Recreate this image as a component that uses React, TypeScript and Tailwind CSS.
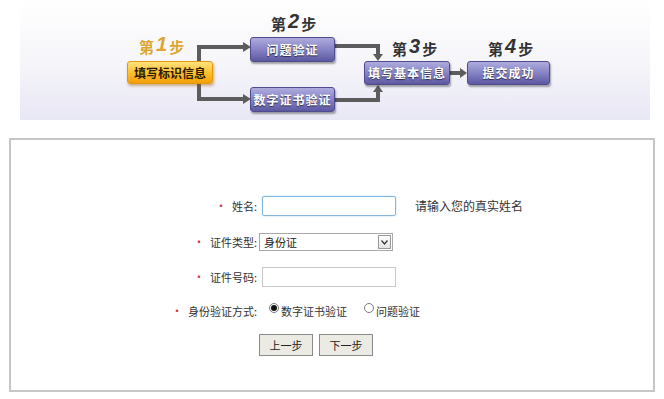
import React from "react";

const font = { fontFamily: '"Noto Sans CJK SC", "Noto Sans", sans-serif' };

// one step node in the banner diagram
const StepBox = ({
  text,
  className,
}: {
  text: string;
  className: string;
}) => (
  <div
    className={`absolute flex items-center justify-center rounded-[3px] border border-[#4f4b8f] bg-linear-to-b from-[#aeacdd] via-[#8783c6] to-[#5d59a1] text-[12px] font-bold tracking-[1px] text-white shadow-[1px_2px_2px_rgba(0,0,0,0.35)] [text-shadow:0_1px_1px_rgba(0,0,0,0.6)] ${className}`}
  >
    {text}
  </div>
);

const StepLabel = ({
  n,
  className,
  color = "text-[#333]",
}: {
  n: string;
  className: string;
  color?: string;
}) => (
  <div className={`absolute flex items-end font-bold ${color} ${className}`}>
    <span className="text-[15px] leading-none">第</span>
    <span className="mx-[2px] text-[20px] italic leading-none [font-family:'Liberation_Sans',sans-serif]">
      {n}
    </span>
    <span className="text-[15px] leading-none">步</span>
  </div>
);

const Label = ({ text }: { text: string }) => (
  <div className="flex w-[251px] items-center justify-end pr-[5px] text-[11px] text-[#333]">
    <span className="mr-[5px] text-[12px] leading-none text-[#d23c4a]">•</span>
    {text}
  </div>
);

const Radio = ({ checked }: { checked?: boolean }) => (
  <span className="mr-[2px] flex h-[10px] w-[10px] -translate-y-[3px] items-center justify-center rounded-full border border-[#7a7a7a] bg-white">
    {checked && <span className="h-[6px] w-[6px] rounded-full bg-[#111]" />}
  </span>
);

const App = () => {
  return (
    <div className="h-[399px] w-[664px] overflow-hidden bg-white" style={font}>
      {/* Steps banner */}
      <div className="relative h-[120px] w-full">
        <div className="absolute left-[20px] top-0 h-[120px] w-[630px] bg-linear-to-b from-white via-[#f6f6fa] to-[#e8e7f5]" />

        <svg
          className="absolute left-0 top-0"
          width="664"
          height="120"
          viewBox="0 0 664 120"
        >
          <g fill="none" stroke="#5c5c5c" strokeWidth="4">
            <path d="M199 62 V47 H244" />
            <path d="M199 84 V99 H244" />
            <path d="M335 46 H378 V55" />
            <path d="M335 100 H378 V91" />
            <path d="M450 73 H461" />
          </g>
          <g fill="#5c5c5c">
            <polygon points="243,42 251,47 243,52" />
            <polygon points="243,94 251,99 243,104" />
            <polygon points="373,54 383,54 378,61" />
            <polygon points="373,92 383,92 378,85" />
            <polygon points="460,68 467,73 460,78" />
          </g>
        </svg>

        <StepLabel
          n="1"
          className="left-[139px] top-[34px]"
          color="text-[#dca630]"
        />
        <StepLabel n="2" className="left-[271px] top-[11px]" />
        <StepLabel n="3" className="left-[392px] top-[36px]" />
        <StepLabel n="4" className="left-[488px] top-[36px]" />

        <div className="absolute left-[127px] top-[61px] flex h-[23px] w-[86px] items-center justify-center rounded-[3px] border border-[#e09a10] bg-linear-to-b from-[#ffe27a] via-[#fcc22c] to-[#f29e06] text-[12px] font-bold text-[#2a1a00] shadow-[1px_2px_3px_rgba(150,90,0,0.45)]">
          填写标识信息
        </div>
        <StepBox text="问题验证" className="left-[250px] top-[37px] h-[25px] w-[85px]" />
        <StepBox
          text="数字证书验证"
          className="left-[250px] top-[87px] h-[25px] w-[85px]"
        />
        <StepBox
          text="填写基本信息"
          className="left-[364px] top-[61px] h-[24px] w-[86px]"
        />
        <StepBox text="提交成功" className="left-[467px] top-[61px] h-[24px] w-[83px]" />
      </div>

      {/* Form */}
      <div className="mx-[9px] mt-[18px] h-[254px] w-[646px] border-2 border-[#c6c6c6] pt-[56px]">
        <div className="flex h-[20px] items-center">
          <Label text="姓名:" />
          <div className="h-[20px] w-[134px] rounded-[2px] border border-[#84b7de] shadow-[0_0_2px_#a9d0ef]" />
          <span className="ml-[19px] text-[12px] text-[#333]">请输入您的真实姓名</span>
        </div>

        <div className="mt-[17px] flex h-[18px] items-center">
          <Label text="证件类型:" />
          <div className="-ml-[3px] flex h-[18px] w-[134px] items-center justify-between border border-[#a9a9a9] pl-[4px] text-[11px] text-[#222]">
            身份证
            <span className="mr-[1px] flex h-[14px] w-[13px] items-center justify-center border border-[#999] bg-linear-to-b from-white to-[#e2e2e2]">
              <svg width="7" height="5" viewBox="0 0 7 5">
                <path d="M0.5 0.5 L3.5 4 L6.5 0.5" fill="none" stroke="#333" strokeWidth="1.2" />
              </svg>
            </span>
          </div>
        </div>

        <div className="mt-[16px] flex h-[20px] items-center">
          <Label text="证件号码:" />
          <div className="h-[20px] w-[134px] border border-[#c8c8c8]" />
        </div>

        <div className="mt-[16px] flex h-[16px] items-center text-[11px] text-[#333]">
          <Label text="身份验证方式:" />
          <div className="ml-[7px] flex items-center">
            <Radio checked />
            数字证书验证
          </div>
          <div className="ml-[17px] flex items-center">
            <Radio />
            问题验证
          </div>
        </div>

        <div className="mt-[15px] flex gap-[6px] pl-[248px]">
          <button className="h-[22px] w-[54px] border border-[#8a8a8a] bg-[#ebebe3] text-[11px] text-[#222]">
            上一步
          </button>
          <button className="h-[22px] w-[54px] border border-[#8a8a8a] bg-[#ebebe3] text-[11px] text-[#222]">
            下一步
          </button>
        </div>
      </div>
    </div>
  );
};

export default App;
